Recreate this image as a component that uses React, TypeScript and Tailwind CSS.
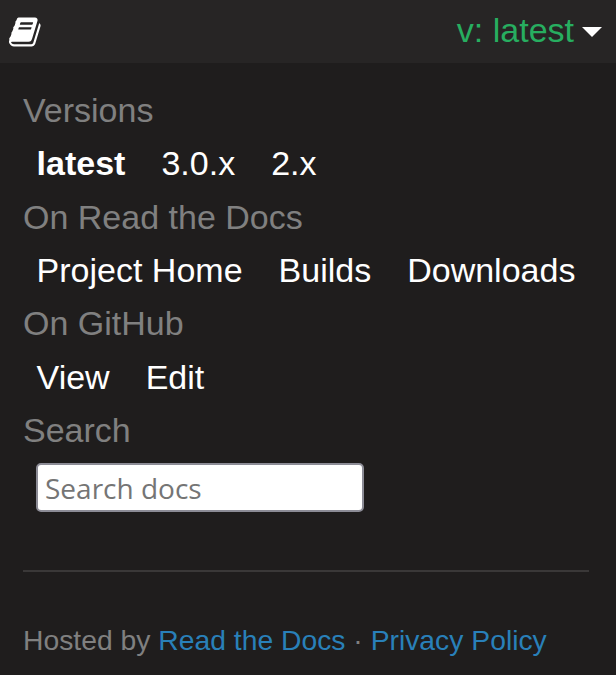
const groups = [
  { title: "Versions", items: ["latest", "3.0.x", "2.x"] },
  { title: "On Read the Docs", items: ["Project Home", "Builds", "Downloads"] },
  { title: "On GitHub", items: ["View", "Edit"] },
];

const BookIcon = () => (
  <svg viewBox="0 0 1792 1792" className="h-[34px] w-[34px]" fill="currentColor">
    <path d="M1639 478q40 57 18 129l-275 906q-19 64-76.5 107.5t-122.5 43.5h-923q-77 0-148.5-53.5t-99.5-131.5q-24-67-2-127 0-4 3-27t4-37q1-8-3-21.5t-3-19.5q2-11 8-21t16.5-23.5 16.5-23.5q23-38 45-91.5t30-91.5q3-10 .5-30t-.5-28q3-11 17-28t17-23q21-36 42-92t25-90q1-9-2.5-32t.5-28q4-13 22-30.5t22-22.5q19-26 42.5-84.5t27.5-96.5q1-8-3-25.5t-2-26.5q2-8 9-18t18-23 17-21q8-12 16.5-30.5t15-35 16-36 19.5-32 26.5-23.5 36-11.5 47.5 5.5l-1 3q38-9 51-9h761q74 0 114 56t18 130l-274 906q-36 119-71.5 153.5t-128.5 34.5h-869q-27 0-38 15-11 16-1 43 24 70 144 70h923q29 0 56-15.5t35-41.5l300-987q7-22 5-57 38 15 59 43zm-1064 2q-4 13 2 22.5t20 9.5h608q13 0 25.5-9.5t16.5-22.5l21-64q4-13-2-22.5t-20-9.5h-608q-13 0-25.5 9.5t-16.5 22.5zm-83 256q-4 13 2 22.5t20 9.5h608q13 0 25.5-9.5t16.5-22.5l21-64q4-13-2-22.5t-20-9.5h-608q-13 0-25.5 9.5t-16.5 22.5z" />
  </svg>
);

export default function App() {
  return (
    <div className="h-[675px] w-[616px] overflow-hidden bg-[#1f1d1d] font-['Liberation_Sans',sans-serif] text-[34px] leading-[42px] text-white">
      <div className="flex h-[63px] items-center justify-between bg-[#272525] pl-[9px] pr-[14px]">
        <BookIcon />
        <div className="flex items-center gap-[8px] text-[#27ae60]">
          <span className="-translate-y-[2px]">v: latest</span>
          <span className="h-0 w-0 border-x-[10px] border-t-[10px] border-x-transparent border-t-white" />
        </div>
      </div>
      <div className="pl-[23px] pr-[27px] pt-[26px]">
        {groups.map((group) => (
          <div key={group.title} className="h-[106.6px]">
            <div className="h-[42px] text-[#808080]">{group.title}</div>
            <div className="flex gap-[36px] pl-[13.6px] pt-[11.4px]">
              {group.items.map((item) => (
                <span key={item} className={item === "latest" ? "font-bold" : ""}>
                  {item}
                </span>
              ))}
            </div>
          </div>
        ))}
        <div className="text-[#808080]">Search</div>
        <input
          placeholder="Search docs"
          className="ml-[13px] mt-[12px] block h-[49px] w-[328px] rounded-[5px] border-2 border-[#8c8c96] bg-white pl-[7px] pr-2 pt-[2px] font-['Open_Sans',sans-serif] text-[28px] placeholder:text-[#757575]"
        />
        <div className="mt-[58px] border-t-2 border-[#3a3838]" />
        <div className="mt-[47px] text-[28.3px] text-[#808080]">
          Hosted by <span className="text-[#2980b9]">Read the Docs</span> ·{" "}
          <span className="text-[#2980b9]">Privacy Policy</span>
        </div>
      </div>
    </div>
  );
}
